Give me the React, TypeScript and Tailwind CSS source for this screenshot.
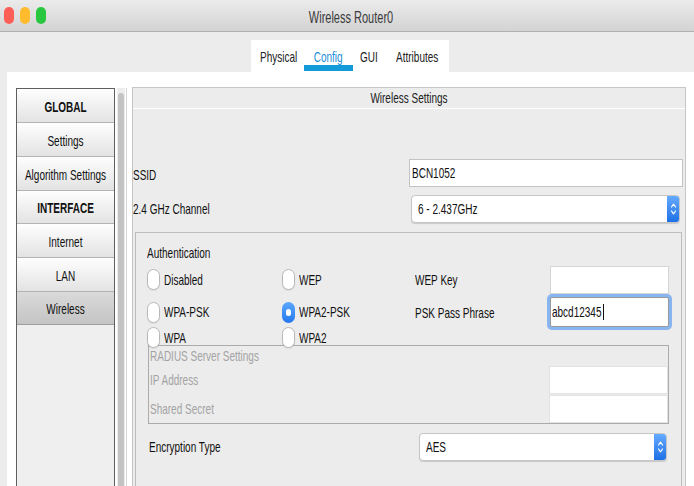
import type { ReactNode } from 'react'

function T({ children, className = '' }: { children: ReactNode; className?: string }) {
  return <span className={`inline-block scale-y-150 leading-[14px] whitespace-nowrap ${className}`}>{children}</span>
}

function Radio({ on }: { on?: boolean }) {
  if (on) {
    return (
      <span className="w-[13px] h-[21px] shrink-0 rounded-full bg-linear-to-b from-[#5ba8ff] to-[#2377ee] flex items-center justify-center">
        <span className="w-[5px] h-[7px] rounded-full bg-white" />
      </span>
    )
  }
  return <span className="w-[13px] h-[21px] shrink-0 rounded-full bg-white border border-[#b8b8b8] shadow-[0_1px_1px_rgba(0,0,0,0.08)]" />
}

function Opt({ label, on, w }: { label: string; on?: boolean; w: string }) {
  return (
    <div className={`flex items-center ${w}`}>
      <Radio on={on} />
      <T className="ml-[4px]">{label}</T>
    </div>
  )
}

function Stepper() {
  return (
    <div className="w-[12px] bg-linear-to-b from-[#64aaff] to-[#1c70e6] flex items-center justify-center">
      <svg width="7" height="16" viewBox="0 0 7 16" fill="none" stroke="white" strokeWidth="1.2" strokeLinecap="round" strokeLinejoin="round">
        <path d="M1.5 6 L3.5 3.2 L5.5 6" />
        <path d="M1.5 10 L3.5 12.8 L5.5 10" />
      </svg>
    </div>
  )
}

function Select({ value, w, pad }: { value: string; w: string; pad: string }) {
  return (
    <div className={`flex h-[28px] ${w} rounded-[4px] bg-white border border-[#c6c6c6] shadow-[0_1px_1px_rgba(0,0,0,0.15)] overflow-hidden`}>
      <div className={`flex-1 flex items-center ${pad}`}><T>{value}</T></div>
      <Stepper />
    </div>
  )
}

const side = [
  { t: 'GLOBAL', h: 'h-[34px]', b: true },
  { t: 'Settings', h: 'h-[34px]' },
  { t: 'Algorithm Settings', h: 'h-[34px]' },
  { t: 'INTERFACE', h: 'h-[33px]', b: true },
  { t: 'Internet', h: 'h-[34px]' },
  { t: 'LAN', h: 'h-[34px]' },
  { t: 'Wireless', h: 'h-[33px]', sel: true },
]

export default function App() {
  return (
    <div className="w-[694px] h-[486px] overflow-hidden bg-[#ececec] text-[10px] text-[#111] flex flex-col font-[family-name:Liberation_Sans,Arial,sans-serif]">
      {/* title bar */}
      <div className="h-[32px] shrink-0 flex items-center bg-linear-to-b from-[#ebebeb] to-[#d3d3d3] border-b border-[#b0b0b0]">
        <div className="flex gap-[6px] pl-[4px]">
          <span className="w-[10px] h-[17px] rounded-full bg-[#fd5f57]" />
          <span className="w-[10px] h-[17px] rounded-full bg-[#febb2e]" />
          <span className="w-[10px] h-[17px] rounded-full bg-[#29c640]" />
        </div>
        <div className="flex-1 mr-[38px] pt-[3px] text-center text-[11px] text-[#3b3b3b]"><T>Wireless Router0</T></div>
      </div>

      {/* tabs */}
      <div className="h-[40px] shrink-0 flex items-end pl-[251px]">
        <div className="w-[198px] h-[32px] bg-white flex pl-[9px] text-[#222]">
          <div className="w-[38px] h-[32px] pt-[1px] flex items-center"><T>Physical</T></div>
          <div className="w-[49px] ml-[6px] h-[32px] flex flex-col">
            <div className="h-[25px] pt-[8px] flex items-center justify-center text-[#1b8ed8]"><T>Config</T></div>
            <div className="h-[6px] bg-[#129ad9]" />
          </div>
          <div className="w-[33px] h-[32px] pt-[1px] flex items-center justify-center"><T>GUI</T></div>
          <div className="w-[64px] h-[32px] pt-[1px] flex items-center justify-center"><T>Attributes</T></div>
        </div>
      </div>

      {/* main */}
      <div className="flex-1 min-h-0 bg-white ml-[7px] flex pt-[15px]">
        {/* sidebar */}
        <div className="flex ml-[9px] mt-[1px] h-[420px] border-r border-[#d6d6d6] pr-[1px]">
          <div className="w-[99px] border border-[#5e5e5e] bg-[#efefef] flex flex-col">
            {side.map((s) => (
              <div
                key={s.t}
                className={`${s.h} shrink-0 pt-[2px] flex items-center justify-center border-b ${
                  s.sel
                    ? 'bg-linear-to-b from-[#dadada] to-[#c4c4c4] border-[#9e9e9e]'
                    : 'bg-linear-to-b from-[#fefefe] to-[#e3e3e3] border-[#b3b3b3]'
                } ${s.b ? 'font-bold' : ''}`}
              >
                <T>{s.t}</T>
              </div>
            ))}
          </div>
          <div className="w-[8px] ml-[2px] bg-[#ededed] pt-[5px] flex justify-center">
            <div className="w-[6px] rounded-full bg-[#c3c3c3] h-full" />
          </div>
        </div>

        {/* content */}
        <div className="ml-[5px] w-[554px] h-[420px] border border-[#c6c6c6] bg-[#ececec] flex flex-col">
          <div className="h-[21px] shrink-0 border-b border-white flex items-center justify-center text-[#222]">
            <T>Wireless Settings</T>
          </div>
          <div className="flex flex-col pt-[50px]">
            <div className="flex items-center h-[28px]">
              <T className="mt-[3px]">SSID</T>
              <div className="ml-auto mr-[2px] w-[274px] h-[28px] bg-white border border-[#c3c3c3] flex items-center pl-[2px]">
                <T>BCN1052</T>
              </div>
            </div>
            <div className="flex items-center h-[28px] mt-[8px]">
              <T>2.4 GHz Channel</T>
              <div className="ml-auto mr-[5px]">
                <Select value="6 - 2.437GHz" w="w-[269px]" pad="pl-[6px]" />
              </div>
            </div>

            {/* authentication group */}
            <div className="mt-[9px] ml-[2px] mr-[3px] h-[300px] border border-[#bdbdbd] flex flex-col pl-[11px] pr-[12px]">
              <div className="h-[32px] pt-[12px]"><T>Authentication</T></div>
              <div className="h-[29px] flex items-center">
                <Opt label="Disabled" w="w-[135px]" />
                <Opt label="WEP" w="w-[133px]" />
                <div className="flex-1"><T>WEP Key</T></div>
                <div className="w-[119px] h-[28px] bg-white border border-[#d6d6d6]" />
              </div>
              <div className="h-[36px] flex items-center">
                <Opt label="WPA-PSK" w="w-[135px]" />
                <Opt label="WPA2-PSK" on w="w-[133px]" />
                <div className="flex-1"><T>PSK Pass Phrase</T></div>
                <div className="w-[119px] h-[30px] bg-white border border-[#9a9a9a] rounded-[2px] ring-[3px] ring-[#88b4f0] flex items-center pl-[1px]">
                  <T>abcd12345</T>
                  <span className="w-[1px] h-[16px] bg-[#111] ml-[1px]" />
                </div>
              </div>
              <div className="h-[15px] flex items-center relative z-10">
                <Opt label="WPA" w="w-[135px]" />
                <Opt label="WPA2" w="w-[133px]" />
              </div>

              {/* radius */}
              <div className="ml-[1px] h-[79px] border border-[#ababab] flex flex-col text-[#a3a3a3]">
                <div className="h-[20px] flex items-center pl-[1px]"><T>RADIUS Server Settings</T></div>
                <div className="h-[29px] flex items-start">
                  <div className="h-[28px] flex items-center pl-[1px] flex-1"><T>IP Address</T></div>
                  <div className="w-[119px] h-[28px] bg-white border border-[#e2e2e2]" />
                </div>
                <div className="h-[28px] flex items-start">
                  <div className="h-[28px] flex items-center pl-[1px] flex-1"><T>Shared Secret</T></div>
                  <div className="w-[119px] h-[28px] bg-white border border-[#e2e2e2]" />
                </div>
              </div>

              <div className="mt-[8px] h-[29px] flex items-center pl-[2px]">
                <T>Encryption Type</T>
                <div className="ml-auto mr-[2px]">
                  <Select value="AES" w="w-[248px]" pad="pl-[6px]" />
                </div>
              </div>
            </div>
          </div>
        </div>
      </div>
    </div>
  )
}
